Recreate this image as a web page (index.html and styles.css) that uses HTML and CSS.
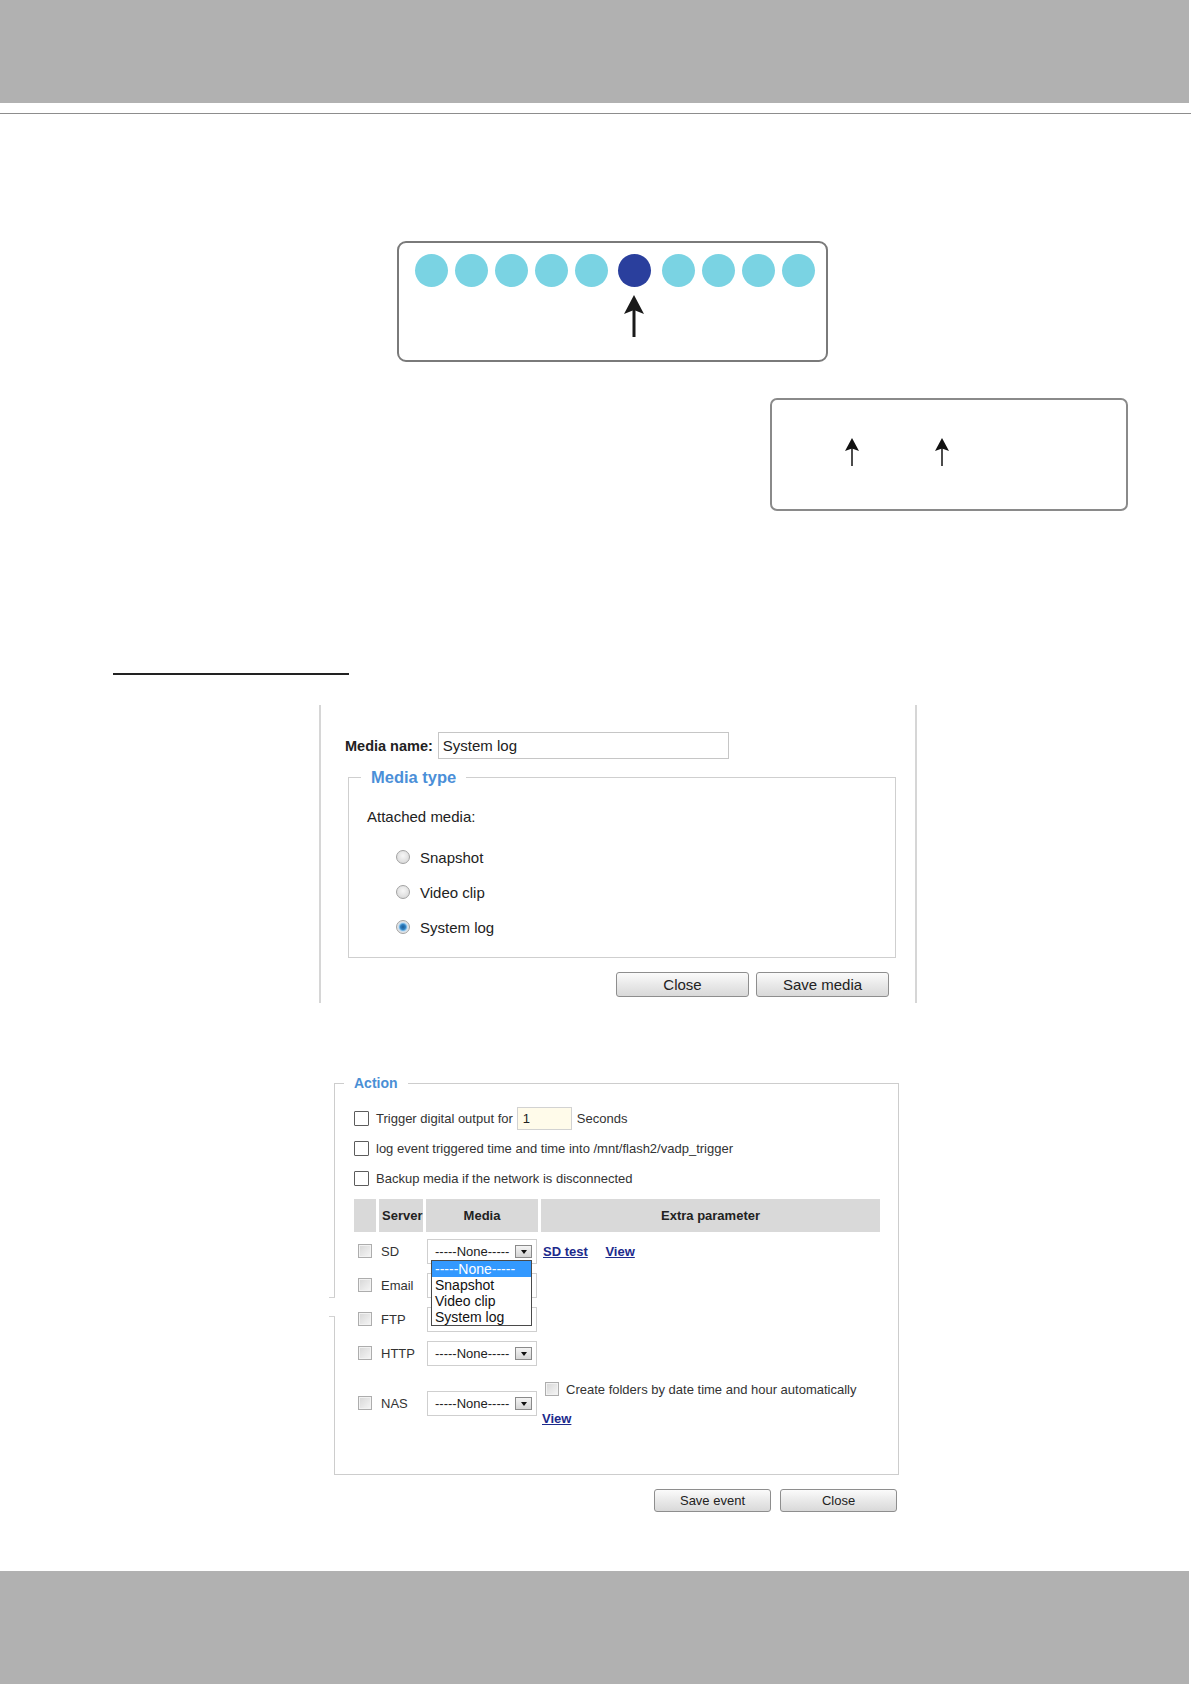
FILE: index.html
```html
<!DOCTYPE html>
<html>
<head>
    <meta charset="UTF-8">
    <meta name="viewport" content="width=device-width, initial-scale=1.0">
    <title>Media and Action</title>
    <link rel="stylesheet" href="styles.css">
</head>
<body>
    <div class="page-top"></div>
    <div class="top-rule"></div>

    <div class="led-box">
        <div class="leds">
            <span class="led"></span>
            <span class="led"></span>
            <span class="led"></span>
            <span class="led"></span>
            <span class="led"></span>
            <span class="led on"></span>
            <span class="led"></span>
            <span class="led"></span>
            <span class="led"></span>
            <span class="led"></span>
        </div>
        <svg class="arrow-big" width="20" height="42" viewBox="0 0 20 42">
            <path d="M10 0 L20 19 L10 15 L0 19 Z" fill="#1a1a1a"/>
            <rect x="8.5" y="14" width="3" height="28" fill="#1a1a1a"/>
        </svg>
    </div>

    <div class="state-box">
        <svg class="arrow-small" width="14" height="28" viewBox="0 0 14 28">
            <path d="M7 0 L14 13 L7 10.5 L0 13 Z" fill="#111"/>
            <rect x="6.25" y="10" width="1.5" height="18" fill="#111"/>
        </svg>
        <svg class="arrow-small" width="14" height="28" viewBox="0 0 14 28">
            <path d="M7 0 L14 13 L7 10.5 L0 13 Z" fill="#111"/>
            <rect x="6.25" y="10" width="1.5" height="18" fill="#111"/>
        </svg>
    </div>

    <div class="section-rule"></div>

    <div class="media-panel">
        <div class="name-row">
            <label class="name-label">Media name:</label>
            <input class="name-input" type="text" value="System log">
        </div>
        <fieldset class="media-type">
            <legend>Media type</legend>
            <p class="attached">Attached media:</p>
            <label class="radio-row first"><input type="radio" name="mtype" class="radio">Snapshot</label>
            <label class="radio-row"><input type="radio" name="mtype" class="radio">Video clip</label>
            <label class="radio-row"><input type="radio" name="mtype" class="radio" checked>System log</label>
        </fieldset>
        <div class="media-btns">
            <button class="btn btn-media">Close</button>
            <button class="btn btn-media">Save media</button>
        </div>
    </div>

    <fieldset class="action">
        <legend>Action</legend>
        <div class="opt-row first">
            <input type="checkbox" class="cb">
            <span>Trigger digital output for</span>
            <input type="text" class="sec-input" value="1">
            <span>Seconds</span>
        </div>
        <div class="opt-row">
            <input type="checkbox" class="cb">
            <span>log event triggered time and time into /mnt/flash2/vadp_trigger</span>
        </div>
        <div class="opt-row">
            <input type="checkbox" class="cb">
            <span>Backup media if the network is disconnected</span>
        </div>

        <div class="srv-grid">
            <span class="notch"></span>
            <div class="srv-head">
                <div class="hcell"></div>
                <div class="hcell left">Server</div>
                <div class="hcell">Media</div>
                <div class="hcell">Extra parameter</div>
            </div>

            <div class="srv-row">
                <input type="checkbox" class="cb-grey">
                <span class="srv-name">SD</span>
                <div class="sel open">
                    <span class="sel-text">-----None-----</span>
                    <span class="sel-btn"></span>
                    <ul class="sel-list">
                        <li class="hl">-----None-----</li>
                        <li>Snapshot</li>
                        <li>Video clip</li>
                        <li>System log</li>
                    </ul>
                </div>
                <div class="extra">
                    <a href="#" class="link">SD test</a>
                    <a href="#" class="link view">View</a>
                </div>
            </div>

            <div class="srv-row">
                <input type="checkbox" class="cb-grey">
                <span class="srv-name">Email</span>
                <div class="sel"><span class="sel-text">-----None-----</span><span class="sel-btn"></span></div>
                <div class="extra"></div>
            </div>

            <div class="srv-row">
                <input type="checkbox" class="cb-grey">
                <span class="srv-name">FTP</span>
                <div class="sel"><span class="sel-text">-----None-----</span><span class="sel-btn"></span></div>
                <div class="extra"></div>
            </div>

            <div class="srv-row">
                <input type="checkbox" class="cb-grey">
                <span class="srv-name">HTTP</span>
                <div class="sel"><span class="sel-text">-----None-----</span><span class="sel-btn"></span></div>
                <div class="extra"></div>
            </div>

            <div class="srv-row nas">
                <input type="checkbox" class="cb-grey">
                <span class="srv-name">NAS</span>
                <div class="sel"><span class="sel-text">-----None-----</span><span class="sel-btn"></span></div>
                <div class="extra nas-extra">
                    <div class="folder-line">
                        <input type="checkbox" class="cb-grey">
                        <span>Create folders by date time and hour automatically</span>
                    </div>
                    <a href="#" class="link">View</a>
                </div>
            </div>
        </div>
    </fieldset>

    <div class="action-btns">
        <button class="btn btn-action">Save event</button>
        <button class="btn btn-action">Close</button>
    </div>

    <div class="page-bottom"></div>
</body>
</html>
```

FILE: styles.css
```css
body {
    font-family: "Liberation Sans", Arial, sans-serif;
    margin: 0;
    padding: 0;
    background-color: white;
    color: #222;
}

.page-top {
    height: 103px;
    margin-right: 2px;
    background-color: #b1b1b1;
}

.top-rule {
    margin-top: 10px;
    border-top: 1px solid #8d8d8d;
}

/* led strip diagram */
.led-box {
    box-sizing: border-box;
    width: 431px;
    height: 121px;
    margin: 127px 0 0 397px;
    padding: 11px 0 0 16px;
    border: 2px solid #7a7a7a;
    border-radius: 9px;
}

.leds {
    display: flex;
    gap: 7px;
}

.led {
    width: 33px;
    height: 33px;
    border-radius: 50%;
    background-color: #7ad3e3;
}

.led.on {
    margin: 0 4px 0 3px;
    background-color: #2a3f9d;
}

.arrow-big {
    display: block;
    margin: 8px 0 0 209px;
}

.state-box {
    box-sizing: border-box;
    width: 358px;
    height: 113px;
    margin: 36px 0 0 770px;
    padding: 38px 0 0 73px;
    border: 2px solid #8a8a8a;
    border-radius: 7px;
    display: flex;
    gap: 76px;
    align-items: flex-start;
}

.arrow-small {
    display: block;
}

.section-rule {
    width: 236px;
    margin: 162px 0 0 113px;
    border-top: 2px solid #222;
}

/* media panel */
.media-panel {
    box-sizing: border-box;
    width: 598px;
    height: 298px;
    margin: 30px 0 0 319px;
    padding: 27px 0 0 24px;
    border-left: 2px solid #d6d6d6;
    border-right: 2px solid #d6d6d6;
}

.name-row {
    display: flex;
    align-items: center;
    height: 27px;
}

.name-label {
    font-size: 14.5px;
    font-weight: bold;
    color: #222;
}

.name-input {
    box-sizing: border-box;
    width: 291px;
    height: 27px;
    margin: 0 0 0 5px;
    padding: 0 4px;
    border: 1px solid #c6c6c6;
    font-family: inherit;
    font-size: 15px;
    color: #222;
}

.media-type {
    box-sizing: border-box;
    width: 548px;
    margin: 8px 0 0 3px;
    padding: 0 0 12.5px 12px;
    border: 1px solid #cfcfcf;
}

.media-type legend {
    padding: 0 10px;
    font-size: 16.5px;
    font-weight: bold;
    line-height: 20px;
    color: #4b8fd8;
}

.attached {
    margin: 21px 0 0 6px;
    font-size: 15px;
    line-height: 18px;
}

.radio-row {
    display: flex;
    align-items: center;
    height: 35px;
    padding-left: 35px;
    font-size: 15px;
}

.radio-row.first {
    margin-top: 13.5px;
}

.radio {
    -webkit-appearance: none;
    appearance: none;
    width: 14px;
    height: 14px;
    margin: 0 10px 0 0;
    border: 1px solid #a2a2a2;
    border-radius: 50%;
    background: radial-gradient(circle at 50% 40%, #f7f7f7, #d2d2d2);
}

.radio:checked {
    background: radial-gradient(circle, #1d5c96 0, #2f7fc0 2.5px, #6fb2e2 3.5px, #c9def0 4.5px, #e4e4e4 5.5px);
}

.media-btns {
    display: flex;
    justify-content: flex-end;
    gap: 7px;
    margin: 14px 26px 0 0;
}

.btn {
    box-sizing: border-box;
    border: 1px solid #8e8e8e;
    border-radius: 3px;
    background: linear-gradient(#fbfbfb, #e9e9e9 50%, #d9d9d9);
    font-family: inherit;
    color: #222;
    padding: 0;
}

.btn-media {
    width: 133px;
    height: 25px;
    font-size: 15px;
}

/* action fieldset */
.action {
    box-sizing: border-box;
    width: 565px;
    margin: 71px 0 0 334px;
    padding: 0 0 38px 19px;
    border: 1px solid #cdcdcd;
    font-size: 13px;
    color: #333;
}

.action legend {
    margin-left: -10px;
    padding: 0 10px;
    font-size: 14px;
    font-weight: bold;
    line-height: 18px;
    color: #4a8fd5;
}

.opt-row {
    display: flex;
    align-items: center;
    height: 23px;
    margin-top: 7px;
}

.opt-row.first {
    margin-top: 15px;
}

.cb {
    -webkit-appearance: none;
    appearance: none;
    width: 15px;
    height: 15px;
    margin: 0 7px 0 0;
    border: 1px solid #5c5c5c;
    border-radius: 1px;
    background-color: #fff;
}

.sec-input {
    box-sizing: border-box;
    width: 55px;
    height: 23px;
    margin: 0 5px 0 4px;
    padding: 0 5px;
    border: 1px solid #d2d2d2;
    background-color: #fffbea;
    font-family: inherit;
    font-size: 13px;
    color: #222;
}

.srv-grid {
    position: relative;
    margin-top: 9px;
}

.notch {
    position: absolute;
    left: -25px;
    top: 98px;
    width: 6px;
    height: 18px;
    border-top: 1px solid #d2d2d2;
    border-bottom: 1px solid #d2d2d2;
    background: linear-gradient(to right, transparent 4px, #fff 4px);
}

.srv-head,
.srv-row {
    display: grid;
    grid-template-columns: 22px 44px 112px 339px;
    column-gap: 3px;
}

.srv-head {
    height: 33px;
}

.hcell {
    display: flex;
    align-items: center;
    justify-content: center;
    background-color: #d9d9d9;
    font-weight: bold;
    color: #222;
}

.hcell.left {
    justify-content: flex-start;
    padding-left: 3px;
}

.srv-row {
    align-items: center;
    height: 34px;
}

.srv-head + .srv-row {
    margin-top: 2px;
}

.srv-row.nas {
    height: 66px;
}

.cb-grey {
    -webkit-appearance: none;
    appearance: none;
    justify-self: center;
    width: 14px;
    height: 14px;
    margin: 0;
    border: 1px solid #adadad;
    background: linear-gradient(135deg, #d6d6d6, #f6f6f6);
    box-shadow: inset 0 0 0 1px #f2f2f2;
}

.srv-name {
    padding-left: 2px;
}

.sel {
    position: relative;
    box-sizing: border-box;
    display: flex;
    align-items: center;
    width: 110px;
    height: 25px;
    margin-left: 1px;
    padding-left: 7px;
    border: 1px solid #cfcfcf;
    background-color: #fff;
    color: #222;
}

.sel-btn {
    position: relative;
    box-sizing: border-box;
    width: 17px;
    height: 13px;
    margin: 0 4px 0 auto;
    border: 1px solid #8a8a8a;
    background: linear-gradient(#f4f4f4, #d4d4d4);
}

.sel-btn::after {
    content: "";
    position: absolute;
    left: 4.5px;
    top: 4px;
    border-left: 3.5px solid transparent;
    border-right: 3.5px solid transparent;
    border-top: 4px solid #111;
}

.sel-list {
    position: absolute;
    left: 3px;
    top: 20px;
    z-index: 2;
    box-sizing: border-box;
    width: 101px;
    margin: 0;
    padding: 0;
    list-style: none;
    border: 1px solid #4a4a4a;
    background-color: #fff;
    font-size: 14px;
    line-height: 16px;
    color: #111;
}

.sel-list li {
    padding-left: 3px;
}

.sel-list .hl {
    background-color: #3399ff;
    color: #fff;
}

.extra {
    padding-left: 2px;
}

.link {
    font-weight: bold;
    color: #1c2a8c;
    text-decoration: underline;
}

.link.view {
    margin-left: 14px;
}

.nas-extra {
    align-self: start;
    padding-top: 9px;
    padding-left: 1px;
}

.folder-line {
    display: flex;
    align-items: center;
    height: 20px;
    margin-bottom: 10px;
}

.folder-line .cb-grey {
    margin: 0 7px 0 3px;
}

.nas-extra .link {
    display: block;
    line-height: 20px;
}

.action-btns {
    display: flex;
    justify-content: flex-end;
    gap: 9px;
    width: 563px;
    margin: 14px 0 0 334px;
}

.btn-action {
    width: 117px;
    height: 23px;
    font-size: 13px;
}

.page-bottom {
    height: 113px;
    margin: 59px 2px 0 0;
    background-color: #b1b1b1;
}
```
